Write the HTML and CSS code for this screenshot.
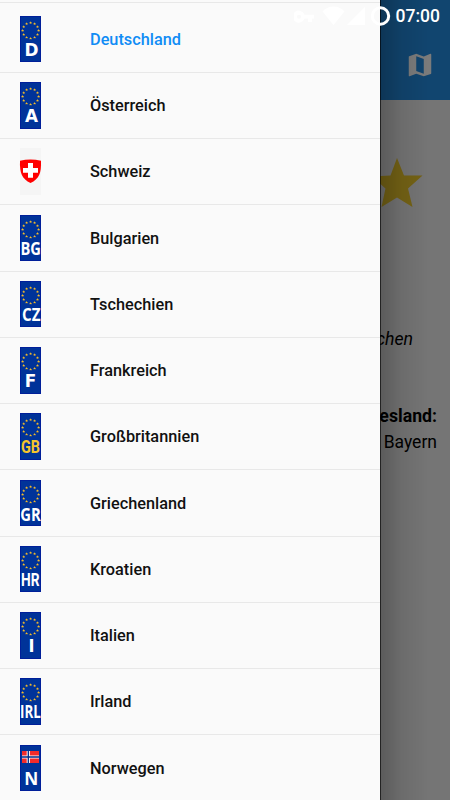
FILE: index.html
```html
<!DOCTYPE html>
<html lang="de">
<head>
  <meta charset="UTF-8">
  <meta name="viewport" content="width=device-width, initial-scale=1.0">
  <title>Kennzeichen</title>
  <link rel="stylesheet" href="styles.css">
</head>
<body>
  <svg class="defs" width="0" height="0">
    <defs>
      <path id="star" d="M0-1.5 .45-.5 1.4-.5 .7.3 .9 1.2 0 .7-.9 1.2-.7.3-1.4-.5-.45-.5z"/>
      <g id="ring" fill="#f5bc2a">
        <use href="#star" x="10.6" y="6.7"/>
        <use href="#star" x="14.6" y="7.8"/>
        <use href="#star" x="17.5" y="10.7"/>
        <use href="#star" x="18.6" y="14.6"/>
        <use href="#star" x="17.5" y="18.5"/>
        <use href="#star" x="14.6" y="21.4"/>
        <use href="#star" x="10.6" y="22.4"/>
        <use href="#star" x="6.6" y="21.4"/>
        <use href="#star" x="3.7" y="18.5"/>
        <use href="#star" x="2.6" y="14.6"/>
        <use href="#star" x="3.7" y="10.7"/>
        <use href="#star" x="6.6" y="7.8"/>
      </g>
    </defs>
  </svg>

  <div class="page">
    <header class="toolbar">
      <svg class="map-icon" viewBox="0 0 24 24"><path d="M20.5 3l-.16.03L15 5.1 9 3 3.36 4.9c-.21.07-.36.25-.36.48V20.5c0 .28.22.5.5.5l.16-.03L9 18.9l6 2.1 5.64-1.9c.21-.07.36-.25.36-.48V3.5c0-.28-.22-.5-.5-.5zM15 19l-6-2.11V5l6 2.11V19z"/></svg>
    </header>
    <main class="content">
      <svg class="favorite" viewBox="0 0 52 50"><path d="M26 0l7 17.5h18.5L37 30.5 41.5 49 26 39.5 10.5 49 14.5 30.5 1 18.5 19.5 17.5z"/></svg>
      <p class="hint">Kennzeichen</p>
      <h2 class="state-title">Bundesland:</h2>
      <p class="state">Bayern</p>
    </main>
  </div>
  <div class="scrim"></div>

  <nav class="drawer">
    <div class="drawer-header"></div>
    <ul class="countries">
      <li class="country active">
        <svg class="plate" viewBox="0 0 21 46.5"><use href="#ring"/><text class="wide" x="4.5" y="40" textLength="14" lengthAdjust="spacingAndGlyphs">D</text></svg>
        <span>Deutschland</span>
      </li>
      <li class="country">
        <svg class="plate" viewBox="0 0 21 46.5"><use href="#ring"/><text class="wide" x="5" y="40" textLength="13" lengthAdjust="spacingAndGlyphs">A</text></svg>
        <span>Österreich</span>
      </li>
      <li class="country">
        <svg class="plate plain" viewBox="0 0 21 46.5"><path fill="#f00" d="M0 12.7Q10.5 10.5 21 12.7C21.5 25 19 31 10.5 35 2 31-.5 25 0 12.7z"/><path fill="#fff" d="M8 15h5v5h5v4.7h-5v5H8v-5H3V20h5z"/></svg>
        <span>Schweiz</span>
      </li>
      <li class="country">
        <svg class="plate" viewBox="0 0 21 46.5"><use href="#ring"/><text x=".5" y="40.2" textLength="20.5" lengthAdjust="spacingAndGlyphs">BG</text></svg>
        <span>Bulgarien</span>
      </li>
      <li class="country">
        <svg class="plate" viewBox="0 0 21 46.5"><use href="#ring"/><text x="2" y="40.2" textLength="18.5" lengthAdjust="spacingAndGlyphs">CZ</text></svg>
        <span>Tschechien</span>
      </li>
      <li class="country">
        <svg class="plate" viewBox="0 0 21 46.5"><use href="#ring"/><text class="wide" x="4.7" y="40" textLength="11.5" lengthAdjust="spacingAndGlyphs">F</text></svg>
        <span>Frankreich</span>
      </li>
      <li class="country">
        <svg class="plate" viewBox="0 0 21 46.5"><use href="#ring"/><text class="sans gold" x="1" y="40.2" textLength="19" lengthAdjust="spacingAndGlyphs">GB</text></svg>
        <span>Großbritannien</span>
      </li>
      <li class="country">
        <svg class="plate" viewBox="0 0 21 46.5"><use href="#ring"/><text x=".3" y="41" textLength="20.5" lengthAdjust="spacingAndGlyphs">GR</text></svg>
        <span>Griechenland</span>
      </li>
      <li class="country">
        <svg class="plate" viewBox="0 0 21 46.5"><use href="#ring"/><text class="sans" x="1" y="40.2" textLength="18.5" lengthAdjust="spacingAndGlyphs">HR</text></svg>
        <span>Kroatien</span>
      </li>
      <li class="country">
        <svg class="plate" viewBox="0 0 21 46.5"><use href="#ring"/><text class="sans" x="8.5" y="40" textLength="6" lengthAdjust="spacingAndGlyphs">I</text></svg>
        <span>Italien</span>
      </li>
      <li class="country">
        <svg class="plate" viewBox="0 0 21 46.5"><use href="#ring"/><text x=".1" y="40.2" textLength="20.8" lengthAdjust="spacingAndGlyphs">IRL</text></svg>
        <span>Irland</span>
      </li>
      <li class="country">
        <svg class="plate" viewBox="0 0 21 46.5"><path fill="#f22b2b" d="M2 6h17v12H2z"/><path fill="none" stroke="#fff" stroke-width="3.2" d="M8.3 6v12M2 12h17"/><path fill="none" stroke="#002a86" stroke-width="1.3" d="M8.3 6v12M2 12h17"/><text x="4.3" y="40.2" textLength="14" lengthAdjust="spacingAndGlyphs">N</text></svg>
        <span>Norwegen</span>
      </li>
    </ul>
  </nav>

  <div class="status-bar">
    <svg class="status-icons" viewBox="0 0 98 22">
      <path fill-rule="evenodd" d="M10.5 9.8a6 6 0 1 0 0 3.6h3.5V17h4v-3.6h2V9.8zM5 9.7a2 2 0 1 1 0 4 2 2 0 0 1 0-4z"/>
      <path d="M28.5 6.5C35-.2 44-.2 50.5 6.5L39.5 20z"/>
      <path d="M53 20L71 2v18z"/>
      <circle cx="86.5" cy="11" r="8.2" fill="none" stroke="#fff" stroke-width="3"/>
    </svg>
    <span class="clock">07:00</span>
  </div>
</body>
</html>
```
FILE: styles.css
```css
* {
  margin: 0;
  padding: 0;
  box-sizing: border-box;
}

body {
  width: 450px;
  height: 800px;
  position: relative;
  overflow: hidden;
  font-family: Roboto, sans-serif;
  color: #000;
}

.defs {
  position: absolute;
}

/* page behind the drawer */
.page {
  height: 800px;
  background-color: #757575;
}

.toolbar {
  display: flex;
  justify-content: flex-end;
  align-items: flex-end;
  height: 100px;
  padding: 0 15px 20px 0;
  background-color: #11456f;
}

.map-icon {
  width: 30px;
  height: 30px;
  fill: #7b7b7b;
}

.content {
  display: flex;
  flex-direction: column;
  align-items: flex-end;
  padding: 58px 13px 0 0;
}

.favorite {
  width: 52px;
  height: 50px;
  margin-right: 14px;
  fill: #756315;
}

.hint {
  margin: 120px 24px 0 0;
  font-size: 17.7px;
  line-height: 22px;
  font-style: italic;
}

.state-title {
  margin-top: 54px;
  font-size: 17.7px;
  line-height: 24px;
}

.state {
  margin-top: 2px;
  font-size: 17.5px;
  line-height: 24px;
}

.scrim {
  position: absolute;
  top: 0;
  left: 380px;
  width: 70px;
  height: 800px;
  background: linear-gradient(to right, rgba(0, 0, 0, 0.22), rgba(0, 0, 0, 0.08) 30%, rgba(0, 0, 0, 0) 70%);
  border-left: 1px solid rgba(0, 0, 0, 0.7);
}

/* drawer */
.drawer {
  position: absolute;
  top: 0;
  left: 0;
  width: 380px;
  height: 800px;
  overflow: hidden;
  background-color: #fafafa;
}

.drawer-header {
  height: 3px;
  border-bottom: 1px solid #e8e8e8;
  margin-bottom: 3.5px;
}

.countries {
  list-style: none;
}

.country {
  display: flex;
  align-items: center;
  gap: 49px;
  height: 66.25px;
  padding-left: 20px;
  border-bottom: 1px solid #e8e8e8;
  font-size: 16.3px;
  font-weight: 500;
  color: #111;
}

.country span {
  padding-top: 0.5px;
}

.country.active {
  color: #108cf5;
}

.plate {
  width: 21px;
  height: 46.5px;
  overflow: visible;
  background-color: #003399;
  box-shadow: inset 0 0 0 1px #001f99;
}

.plate.plain {
  background-color: #f5f5f5;
  box-shadow: none;
}

.plate text {
  font-family: "Open Sans", sans-serif;
  font-size: 18px;
  font-weight: 700;
  fill: #fff;
}

.plate .wide {
  font-family: "DejaVu Sans", sans-serif;
  font-size: 17px;
}

.plate .sans {
  font-family: Roboto, sans-serif;
}

.plate .gold {
  fill: #f5c52c;
}

/* status bar */
.status-bar {
  position: absolute;
  top: 4px;
  right: 10px;
  display: flex;
  align-items: center;
  gap: 4px;
  color: #fff;
}

.status-icons {
  width: 98px;
  height: 22px;
  fill: #fff;
}

.clock {
  padding-top: 1px;
  font-size: 17.5px;
  font-weight: 500;
  line-height: 22px;
}
```
